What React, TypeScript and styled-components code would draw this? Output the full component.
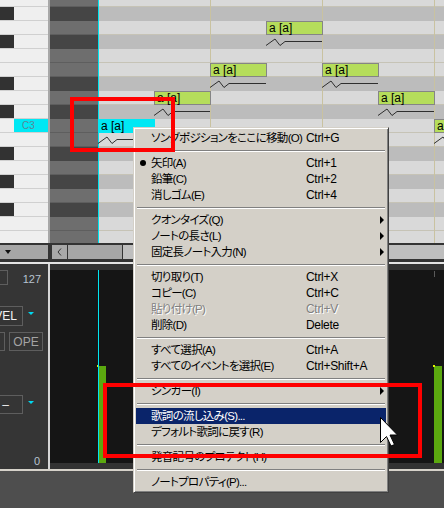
import React from 'react';
import styled, { createGlobalStyle } from 'styled-components';

const GlobalStyle = createGlobalStyle`
  html, body {
    margin: 0;
    padding: 0;
    background: #4e4e4e;
    overflow: hidden;
  }
  body {
    font-family: "Liberation Sans", "Noto Sans CJK JP", sans-serif;
  }
`;

const ROW_H = 14;
const NOTE_W = 56;
const PITCHES = ['A3', 'G#3', 'G3', 'F#3', 'F3', 'E3', 'D#3', 'D3', 'C#3', 'C3', 'B2', 'A#2', 'A2', 'G#2', 'G2', 'F#2', 'F2', 'E2'];
const NOTES = [
  { col: 0, pitch: 'C3', selected: true },
  { col: 1, pitch: 'D3' },
  { col: 2, pitch: 'E3' },
  { col: 3, pitch: 'G3' },
  { col: 4, pitch: 'E3' },
  { col: 5, pitch: 'D3' },
  { col: 6, pitch: 'C3' },
];
const BEAT_LINES = [160, 272, 384];

type MenuEntry =
  | { sep: true }
  | { sep?: false; label: string; shortcut?: string; submenu?: boolean; checked?: boolean; disabled?: boolean; active?: boolean };

const MENU: MenuEntry[] = [
  { label: 'ソングポジションをここに移動(O)', shortcut: 'Ctrl+G' },
  { sep: true },
  { label: '矢印(A)', shortcut: 'Ctrl+1', checked: true },
  { label: '鉛筆(C)', shortcut: 'Ctrl+2' },
  { label: '消しゴム(E)', shortcut: 'Ctrl+4' },
  { sep: true },
  { label: 'クオンタイズ(Q)', submenu: true },
  { label: 'ノートの長さ(L)', submenu: true },
  { label: '固定長ノート入力(N)', submenu: true },
  { sep: true },
  { label: '切り取り(T)', shortcut: 'Ctrl+X' },
  { label: 'コピー(C)', shortcut: 'Ctrl+C' },
  { label: '貼り付け(P)', shortcut: 'Ctrl+V', disabled: true },
  { label: '削除(D)', shortcut: 'Delete' },
  { sep: true },
  { label: 'すべて選択(A)', shortcut: 'Ctrl+A' },
  { label: 'すべてのイベントを選択(E)', shortcut: 'Ctrl+Shift+A' },
  { sep: true },
  { label: 'シンガー(I)', submenu: true },
  { sep: true },
  { label: '歌詞の流し込み(S)...', active: true },
  { label: 'デフォルト歌詞に戻す(R)' },
  { sep: true },
  { label: '発音記号のプロテクト(H)' },
  { sep: true },
  { label: 'ノートプロパティ(P)...' },
];

const Screen = styled.div`
  position: relative;
  width: 444px;
  height: 508px;
  display: flex;
  flex-direction: column;
  background: #4e4e4e;
  overflow: hidden;
`;

/* ---------- piano roll ---------- */

const Roll = styled.div`
  display: flex;
  height: 243px;
  flex-shrink: 0;
  overflow: hidden;
`;

const Keyboard = styled.div`
  width: 48px;
  display: flex;
  flex-direction: column;
  margin-top: -7px;
  background: #efefef;
`;

const Key = styled.div`
  display: flex;
  height: ${ROW_H}px;
  flex-shrink: 0;
  box-sizing: border-box;
  border-bottom: 1px solid #d0d0d0;
`;

const KeyBlack = styled.div<{ $black: boolean }>`
  width: 14px;
  background: ${p => (p.$black ? '#323232' : 'transparent')};
`;

const KeyLabel = styled.div<{ $current: boolean }>`
  flex: 1;
  background: ${p => (p.$current ? '#00e8f4' : 'transparent')};
  color: #5b8797;
  font-size: 10px;
  line-height: 13px;
  padding-left: 8px;
`;

const KeySep = styled.div`
  width: 2px;
  background: #a8a8a8;
`;

const Grid = styled.div`
  position: relative;
  flex: 1;
  overflow: hidden;
`;

const RowStack = styled.div`
  display: flex;
  flex-direction: column;
  margin-top: -7px;
`;

const GridRow = styled.div`
  display: flex;
  height: ${ROW_H}px;
  flex-shrink: 0;
`;

const PreRoll = styled.div<{ $black: boolean }>`
  width: 48px;
  box-sizing: border-box;
  background: ${p => (p.$black ? '#454545' : '#6e6e6e')};
  border-bottom: 1px solid ${p => (p.$black ? '#454545' : '#5e5e5e')};
`;

const Lane = styled.div<{ $black: boolean }>`
  flex: 1;
  box-sizing: border-box;
  background: ${p => (p.$black ? '#bcbcbc' : '#d9d9d9')};
  border-bottom: 1px solid ${p => (p.$black ? '#bcbcbc' : '#c6c3b6')};
`;

const BeatLine = styled.div`
  position: absolute;
  top: 0;
  bottom: 0;
  width: 1px;
  background: #c9c2a0;
`;

const SongLine = styled.div`
  position: absolute;
  top: 0;
  bottom: 0;
  left: 48px;
  width: 1px;
  background: #00e4f0;
`;

const Note = styled.div<{ $selected?: boolean }>`
  position: absolute;
  width: ${NOTE_W + 1}px;
  height: ${ROW_H}px;
  box-sizing: border-box;
  border: 1px solid ${p => (p.$selected ? '#00e8f4' : '#858585')};
  background: ${p => (p.$selected ? '#00e8f4' : '#b5dd5b')};
  color: #000;
  font-size: 12px;
  line-height: 12px;
  padding-left: 2px;
  white-space: nowrap;
`;

const Curve = styled.svg`
  position: absolute;
  width: ${NOTE_W}px;
  height: ${ROW_H}px;
  overflow: visible;
`;

/* ---------- scroll band ---------- */

const ScrollBand = styled.div`
  display: flex;
  gap: 1px;
  height: 14px;
  flex-shrink: 0;
  border-top: 2px solid #333;
  border-bottom: 3px solid #333;
  background: #333;
`;

const TrackSelect = styled.div`
  width: 48px;
  margin-right: 3px;
  background: #a6a6a6;
  display: flex;
  align-items: center;
  padding-left: 5px;
  box-sizing: border-box;
`;

const DownTriangle = styled.div<{ $color: string }>`
  width: 0;
  height: 0;
  border-left: 3px solid transparent;
  border-right: 3px solid transparent;
  border-top: 4px solid ${p => p.$color};
`;

const ScrollButton = styled.div`
  width: 15px;
  background: #a8a8a8;
  display: flex;
  align-items: center;
  justify-content: center;
`;

const ScrollThumb = styled.div`
  width: 54px;
  background: #a6a6a6;
`;

const ScrollTrack = styled.div`
  flex: 1;
  background: #bebebe;
`;

const HLine = styled.div<{ $color: string }>`
  height: 2px;
  flex-shrink: 0;
  background: ${p => p.$color};
`;

/* ---------- control track ---------- */

const Lower = styled.div`
  display: flex;
  height: 205px;
  flex-shrink: 0;
`;

const LeftPanel = styled.div`
  width: 48px;
  background: #353535;
  display: flex;
  flex-direction: column;
  overflow: hidden;
  font-size: 11px;
`;

const PanelTop = styled.div`
  display: flex;
  justify-content: space-between;
  align-items: flex-start;
  height: 21px;
`;

const OutlineBox = styled.div<{ $w: number; $h: number; $ml: number }>`
  width: ${p => p.$w}px;
  height: ${p => p.$h}px;
  margin-left: ${p => p.$ml}px;
  flex-shrink: 0;
  box-sizing: border-box;
  border: 1px solid #5e5e5e;
  display: flex;
  align-items: center;
  justify-content: center;
  font-size: 12px;
`;

const RangeLabel = styled.div<{ $bottom?: boolean }>`
  color: #b8c4d0;
  font-size: 11px;
  line-height: 12px;
  margin-top: ${p => (p.$bottom ? 'auto' : '3px')};
  margin-right: ${p => (p.$bottom ? '8px' : '7px')};
  margin-bottom: ${p => (p.$bottom ? '2px' : '0')};
  align-self: flex-end;
`;

const PanelRow = styled.div<{ $mt: number }>`
  display: flex;
  align-items: flex-start;
  margin-top: ${p => p.$mt}px;
`;

const SelectText = styled.span<{ $color: string }>`
  color: ${p => p.$color};
  line-height: 14px;
`;

const CyanMark = styled.div`
  margin-left: 5px;
  margin-top: 6px;
  width: 0;
  height: 0;
  border-left: 3px solid transparent;
  border-right: 3px solid transparent;
  border-top: 3px solid #00d8f0;
`;

const VSep = styled.div`
  width: 2px;
  background: #d6d6d6;
`;

const Velocity = styled.div`
  flex: 1;
  display: flex;
  padding: 6px 0;
  background: #333;
`;

const VelCanvas = styled.div`
  position: relative;
  flex: 1;
  background: #151515;
`;

const VelBar = styled.div`
  position: absolute;
  bottom: 0;
  width: 8px;
  background: #5ba80f;
  &::before {
    content: '';
    position: absolute;
    left: -1px;
    top: -1px;
    width: 2px;
    height: 2px;
    background: #dcf000;
  }
`;

const VelTick = styled.div`
  position: absolute;
  top: 1px;
  width: 1px;
  height: 6px;
  background: #5a5a5a;
`;

const Status = styled.div`
  flex: 1;
  background: #4e4e4e;
`;

/* ---------- context menu ---------- */

const Menu = styled.div`
  position: absolute;
  left: 133px;
  top: 127px;
  width: 256px;
  box-sizing: border-box;
  padding: 2px;
  background: #d4d0c8;
  border: 1px solid;
  border-color: #d4d0c8 #404040 #404040 #d4d0c8;
  box-shadow: inset 1px 1px 0 #ffffff, inset -1px -1px 0 #808080;
  font-family: "Liberation Sans", "Noto Sans CJK JP", sans-serif;
  font-size: 12px;
  z-index: 5;
`;

const MenuRow = styled.div<{ $active?: boolean; $disabled?: boolean }>`
  display: grid;
  grid-template-columns: 15px 155px 1fr 12px;
  align-items: center;
  height: 16px;
  line-height: 16px;
  white-space: nowrap;
  background: ${p => (p.$active ? '#0a246a' : 'transparent')};
  color: ${p => (p.$active ? '#ffffff' : p.$disabled ? '#808080' : '#000000')};
  text-shadow: ${p => (p.$disabled ? '1px 1px 0 #ffffff' : 'none')};
`;

const MenuLabel = styled.span`
  font-size: 11.5px;
  font-feature-settings: "palt";
  letter-spacing: -0.7px;
`;

const Shortcut = styled.span`
  letter-spacing: -0.3px;
`;

const Bullet = styled.span`
  width: 6px;
  height: 6px;
  margin-left: 4px;
  border-radius: 50%;
  background: currentColor;
`;

const SubArrow = styled.span`
  margin-left: 6px;
  width: 0;
  height: 0;
  border-top: 4px solid transparent;
  border-bottom: 4px solid transparent;
  border-left: 4px solid currentColor;
`;

const MenuSep = styled.div`
  height: 2px;
  margin: 4px 1px 3px;
  border-top: 1px solid #808080;
  background: #ffffff;
  box-sizing: border-box;
`;

/* ---------- annotations ---------- */

const Highlight = styled.div`
  position: absolute;
  box-sizing: border-box;
  border: 4px solid #ff0000;
  z-index: 8;
`;

const Cursor = styled.svg`
  position: absolute;
  left: 380px;
  top: 417px;
  width: 19px;
  height: 31px;
  z-index: 9;
`;

export default function App() {
  return (
    <>
      <GlobalStyle />
      <Screen>
        <Roll>
          <Keyboard>
            {PITCHES.map(p => (
              <Key key={p}>
                <KeyBlack $black={p.includes('#')} />
                <KeyLabel $current={p === 'C3'}>{p === 'C3' ? 'C3' : ''}</KeyLabel>
              </Key>
            ))}
          </Keyboard>
          <KeySep />
          <Grid>
            <RowStack>
              {PITCHES.map(p => (
                <GridRow key={p}>
                  <PreRoll $black={p.includes('#')} />
                  <Lane $black={p.includes('#')} />
                </GridRow>
              ))}
            </RowStack>
            {BEAT_LINES.map(x => (
              <BeatLine key={x} style={{ left: x }} />
            ))}
            <SongLine />
            {NOTES.map((n, i) => {
              const left = 48 + n.col * NOTE_W;
              const top = PITCHES.indexOf(n.pitch) * ROW_H - 7;
              return (
                <React.Fragment key={i}>
                  <Note $selected={n.selected} style={{ left, top }}>a [a]</Note>
                  <Curve style={{ left, top: top + ROW_H }} viewBox="0 0 56 14">
                    <polyline
                      points="0,10.5 9,4 14,10.5 19,6.5 56,6.5"
                      fill="none"
                      stroke="#2e2e2e"
                      strokeWidth="1"
                    />
                  </Curve>
                </React.Fragment>
              );
            })}
          </Grid>
        </Roll>

        <ScrollBand>
          <TrackSelect>
            <DownTriangle $color="#111" />
          </TrackSelect>
          <ScrollButton>
            <svg width="5" height="8" viewBox="0 0 5 8">
              <polyline points="4,0.5 1,4 4,7.5" fill="none" stroke="#333" strokeWidth="1" />
            </svg>
          </ScrollButton>
          <ScrollThumb />
          <ScrollTrack />
        </ScrollBand>
        <HLine $color="#e4e4e4" />

        <Lower>
          <LeftPanel>
            <PanelTop>
              <OutlineBox $w={30} $h={15} $ml={-22} style={{ marginTop: 6 }} />
              <RangeLabel>127</RangeLabel>
            </PanelTop>
            <PanelRow $mt={21}>
              <OutlineBox $w={35} $h={20} $ml={-12}>
                <SelectText $color="#f2f2f2">VEL</SelectText>
              </OutlineBox>
              <CyanMark />
            </PanelRow>
            <PanelRow $mt={6}>
              <OutlineBox $w={25} $h={19} $ml={-20} />
              <OutlineBox $w={34} $h={19} $ml={4}>
                <SelectText $color="#a4a4a4">OPE</SelectText>
              </OutlineBox>
            </PanelRow>
            <PanelRow $mt={44}>
              <OutlineBox $w={35} $h={19} $ml={-12}>
                <SelectText $color="#f2f2f2">–</SelectText>
              </OutlineBox>
              <CyanMark />
            </PanelRow>
            <RangeLabel $bottom>0</RangeLabel>
          </LeftPanel>
          <VSep />
          <Velocity>
            <VelCanvas>
              {BEAT_LINES.map(x => (
                <VelTick key={x} style={{ left: x }} />
              ))}
              <VelBar style={{ left: 48, height: 97 }} />
              <VelBar style={{ left: 384, height: 97 }} />
              <SongLine />
            </VelCanvas>
          </Velocity>
        </Lower>
        <HLine $color="#d6d2ca" />
        <Status />

        <Menu>
          {MENU.map((m, i) =>
            m.sep ? (
              <MenuSep key={i} />
            ) : (
              <MenuRow key={i} $active={m.active} $disabled={m.disabled}>
                <span style={{ display: 'flex' }}>{m.checked && <Bullet />}</span>
                <MenuLabel>{m.label}</MenuLabel>
                <Shortcut>{m.shortcut}</Shortcut>
                {m.submenu ? <SubArrow /> : <span />}
              </MenuRow>
            )
          )}
        </Menu>

        <Highlight style={{ left: 70, top: 97, width: 105, height: 55 }} />
        <Highlight style={{ left: 103, top: 383, width: 319, height: 75 }} />

        <Cursor viewBox="0 0 19 31">
          <path
            d="M0.5,0.5 L0.5,25.5 L6.5,19.5 L11,29 L14.5,27.5 L10,18 L17.5,18 Z"
            fill="#ffffff"
            stroke="#000000"
            strokeWidth="1"
            strokeLinejoin="miter"
          />
        </Cursor>
      </Screen>
    </>
  );
}
